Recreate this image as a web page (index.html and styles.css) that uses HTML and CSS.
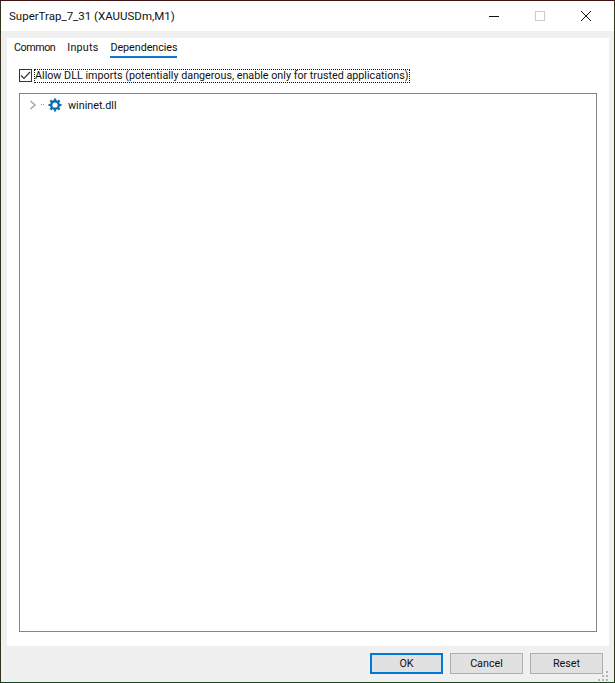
FILE: index.html
```html
<!DOCTYPE html>
<html lang="en">
<head>
<meta charset="utf-8">
<title>SuperTrap_7_31</title>
<link rel="stylesheet" href="styles.css">
</head>
<body>
<div class="window">
  <header class="titlebar">
    <span class="title">SuperTrap_7_31 (XAUUSDm,M1)</span>
    <div class="controls">
      <span class="ctl"><svg width="12" height="12" viewBox="0 0 12 12"><path d="M1 6.500H11" stroke="#111" fill="none"/></svg></span>
      <span class="ctl"><svg width="12" height="12" viewBox="0 0 12 12"><rect x="1.500" y="1.500" width="9" height="9" stroke="#ccc" fill="none"/></svg></span>
      <span class="ctl"><svg width="12" height="12" viewBox="0 0 12 12"><path d="M1 1L11 11M11 1L1 11" stroke="#111" fill="none"/></svg></span>
    </div>
  </header>
  <main class="body">
    <section class="panel">
      <nav class="tabs">
        <span class="tab tab-common">Common</span>
        <span class="tab tab-inputs">Inputs</span>
        <span class="tab active">Dependencies</span>
      </nav>
      <div class="allow">
        <span class="check"><svg width="13" height="13" viewBox="0 0 13 13"><path d="M2 6.500L5 9.500L11 3" stroke="#333" stroke-width="1.200" fill="none"/></svg></span>
        <span class="allow-label">Allow DLL imports (potentially dangerous, enable only for trusted applications)</span>
      </div>
      <div class="tree">
        <div class="node">
          <svg class="chev" width="8" height="10" viewBox="0 0 8 10"><path d="M1.500 1L6 5L1.500 9" stroke="#a6a6a6" stroke-width="1.500" fill="none"/></svg>
          <span class="dots"></span>
          <svg class="gear" width="14" height="14" viewBox="0 0 14 14"><circle cx="7" cy="7" r="3.800" fill="none" stroke="#0f6cb0" stroke-width="2.400"/><path d="M7 .5V3M7 11V13.500M.5 7H3M11 7H13.500M2.400 2.400L4 4M10 10L11.600 11.600M11.600 2.400L10 4M4 10L2.400 11.600" stroke="#0f6cb0" stroke-width="2.200"/></svg>
          <span class="node-name">wininet.dll</span>
        </div>
      </div>
    </section>
    <footer class="actions">
      <button class="btn default">OK</button>
      <button class="btn">Cancel</button>
      <button class="btn">Reset</button>
      <svg class="grip" width="12" height="12" viewBox="0 0 12 12"><path d="M9 1h2v2H9zM5 5h2v2H5zM9 5h2v2H9zM1 9h2v2H1zM5 9h2v2H5zM9 9h2v2H9z" fill="#b4b4b4"/></svg>
    </footer>
  </main>
</div>
</body>
</html>
```
FILE: styles.css
```css
* { box-sizing: border-box; }
html, body { margin: 0; padding: 0; }
body {
  width: 615px;
  height: 683px;
  font-family: Roboto, "Open Sans", sans-serif;
  font-size: 10.75px;
  color: #111;
  overflow: hidden;
}
.window {
  width: 615px;
  height: 683px;
  display: flex;
  flex-direction: column;
  background: #fff;
  border-top: 1px solid #3f1113;
  border-left: 1px solid #33301c;
  border-right: 1px solid #33301c;
  border-bottom: 1px solid #17451f;
}
.titlebar {
  height: 30px;
  flex: none;
  display: flex;
  align-items: center;
  justify-content: space-between;
  background: #fff;
  padding-left: 8px;
}
.title { font-size: 11.5px; color: #111; }
.controls { display: flex; align-items: center; padding-right: 5px; }
.ctl {
  width: 46px;
  height: 30px;
  display: flex;
  align-items: center;
  justify-content: center;
}
.body {
  flex: 1;
  display: flex;
  flex-direction: column;
  background: #f0f0f0;
  padding: 7px 5px 0 6px;
}
.panel {
  height: 608px;
  flex: none;
  background: #fff;
  padding: 0 12px 14px 12px;
  display: flex;
  flex-direction: column;
}
.tabs {
  display: flex;
  gap: 12px;
  height: 20px;
  margin-left: -5px;
  flex: none;
  align-items: flex-start;
}
.tab { height: 20px; line-height: 19px; border-bottom: 2px solid transparent; }
.tab-common { letter-spacing: -0.45px; }
.tab-inputs { letter-spacing: 0.2px; }
.tab.active { border-bottom-color: #0a78d4; letter-spacing: -0.05px; }
.allow {
  margin-top: 10px;
  display: flex;
  align-items: center;
  height: 15px;
  flex: none;
}
.check {
  width: 13px;
  height: 13px;
  border: 1px solid #333;
  display: block;
  margin-right: 2px;
  flex: none;
  line-height: 0;
}
.check svg { margin: -1px; display: block; }
.allow-label {
  outline: 1px dotted #111;
  outline-offset: -1px;
  height: 14px;
  line-height: 14px;
  padding: 0 1px;
  white-space: nowrap;
}
.tree {
  margin-top: 10px;
  flex: 1;
  border: 1px solid #84848a;
  padding: 2px 0 0 9px;
}
.node { display: flex; align-items: center; height: 17px; }
.chev { flex: none; }
.dots { width: 3px; height: 1px; margin: 0 4px; border-top: 1px dotted #999; flex: none; }
.gear { flex: none; }
.node-name { margin-left: 6px; padding-top: 2px; }
.actions {
  flex: 1;
  display: flex;
  justify-content: flex-end;
  gap: 7px;
  padding: 7px 6px 0 0;
  align-items: flex-start;
  position: relative;
}
.btn {
  width: 73px;
  height: 21px;
  background: #e1e1e1;
  border: 1px solid #adadad;
  font: inherit;
  color: #111;
  padding: 0;
}
.btn.default { border: 2px solid #0078d7; }
.grip { position: absolute; right: 0; bottom: 0; }
```
